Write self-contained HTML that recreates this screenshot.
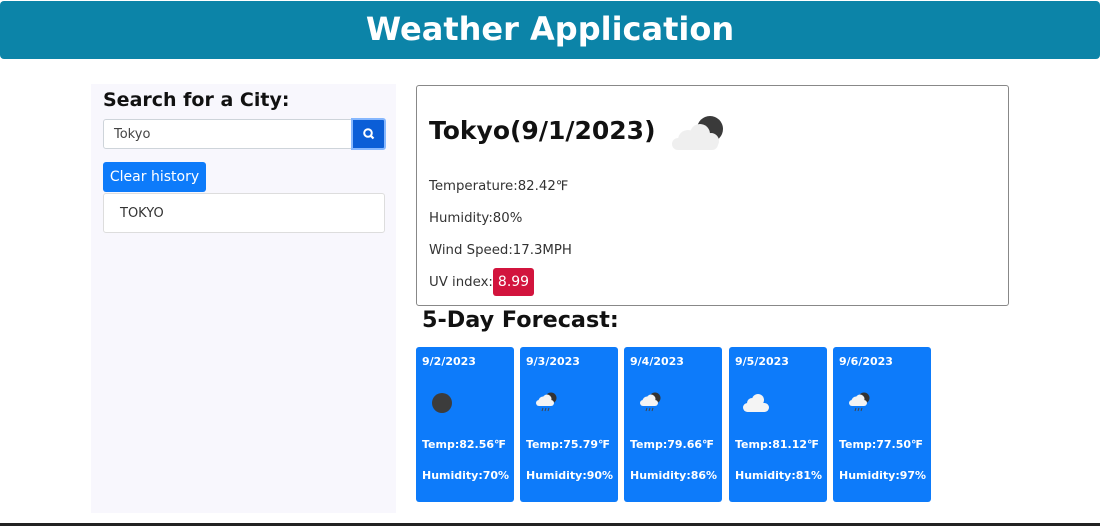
<!DOCTYPE html>
<html><head><meta charset="utf-8"><style>
*{box-sizing:border-box;margin:0;padding:0}
body{width:1100px;height:526px;background:#fff;position:relative;overflow:hidden;font-family:"DejaVu Sans","Liberation Sans",sans-serif;color:#333}
.a{position:absolute}
.hdr{left:0;top:1px;width:1100px;height:58px;background:#0c84a8;border-radius:4px;color:#fff;font-weight:bold;font-size:32px;text-align:center;line-height:56px}
.side{left:91px;top:84px;width:305px;height:429px;background:#f8f7fd}
.card{background:#0d7bfa;border-radius:3px;width:98px;height:155px;top:347px;color:#fff;font-size:11px;font-weight:bold}
.card div{position:absolute;left:6px}
.main{left:416px;top:85px;width:593px;height:221px;border:1px solid #888;border-radius:3px}
.t{font-size:13.3px;color:#333;left:429px}
</style></head><body>
<div class="a hdr">Weather Application</div>
<div class="a side"></div>
<div class="a" style="left:103px;top:89px;font-size:19px;font-weight:bold;color:#111">Search for a City:</div>
<div class="a" style="left:103px;top:119px;width:249px;height:30px;background:#fff;border:1px solid #ced4da;border-radius:3px 0 0 3px;font-size:13px;color:#444;padding:7px 10px">Tokyo</div>
<div class="a" style="left:351px;top:118px;width:35px;height:32px;background:#0b5ed7;border:2px solid #86b7fe;border-radius:0 3px 3px 0">
<svg width="31" height="28" viewBox="0 0 31 28"><circle cx="15" cy="13" r="3.8" stroke="#fff" stroke-width="2" fill="none"/><line x1="17.8" y1="15.8" x2="20.5" y2="18.5" stroke="#fff" stroke-width="2.2"/></svg></div>
<div class="a" style="left:103px;top:162px;width:103px;height:30px;background:#0d7bfa;border-radius:3px;color:#fff;font-size:14px;line-height:31px;text-align:center">Clear history</div>
<div class="a" style="left:103px;top:193px;width:282px;height:40px;background:#fff;border:1px solid #ddd;border-radius:3px;font-size:13px;color:#333;padding:12px 16px">TOKYO</div>
<div class="a main"></div>
<div class="a" style="left:429px;top:116px;font-size:25px;font-weight:bold;color:#111">Tokyo(9/1/2023)</div>
<svg class="a" style="left:668px;top:112px" width="60" height="42" viewBox="0 0 60 42"><circle cx="42" cy="17" r="13" fill="#3a3a3a"/><g fill="#efefef"><circle cx="20" cy="28" r="10"/><circle cx="32" cy="22" r="10"/><rect x="4" y="26" width="46" height="12" rx="6"/><circle cx="43" cy="29" r="8"/></g></svg>
<div class="a t" style="top:179px">Temperature:82.42℉</div>
<div class="a t" style="top:211px">Humidity:80%</div>
<div class="a t" style="top:243px">Wind Speed:17.3MPH</div>
<div class="a t" style="top:275px">UV index:</div>
<div class="a" style="left:493px;top:268px;width:41px;height:28px;background:#d2143d;border-radius:3px;color:#fff;font-size:14px;line-height:28px;text-align:center">8.99</div>
<div class="a" style="left:422px;top:307px;font-size:22.3px;font-weight:bold;color:#111">5-Day Forecast:</div>

<div class="a card" style="left:416px"><div style="top:8px">9/2/2023</div><svg class="a" style="left:14px;top:44px" width="24" height="24"><circle cx="12" cy="12" r="10" fill="#3c3c3c"/></svg><div style="top:91px">Temp:82.56℉</div><div style="top:122px">Humidity:70%</div></div>
<div class="a card" style="left:520px"><div style="top:8px">9/3/2023</div><svg class="a" style="left:14px;top:42px" width="26" height="26"><circle cx="17" cy="9" r="5.5" fill="#333"/><g fill="#f4f4f4"><circle cx="9" cy="12" r="4.5"/><circle cx="13" cy="10" r="4.5"/><rect x="2" y="11" width="18" height="6" rx="3"/></g><g stroke="#444" stroke-width="1"><line x1="9" y1="19" x2="8" y2="22"/><line x1="12" y1="19" x2="11" y2="22"/><line x1="15" y1="19" x2="14" y2="22"/></g></svg><div style="top:91px">Temp:75.79℉</div><div style="top:122px">Humidity:90%</div></div>
<div class="a card" style="left:624px"><div style="top:8px">9/4/2023</div><svg class="a" style="left:14px;top:42px" width="26" height="26"><circle cx="17" cy="9" r="5.5" fill="#333"/><g fill="#f4f4f4"><circle cx="9" cy="12" r="4.5"/><circle cx="13" cy="10" r="4.5"/><rect x="2" y="11" width="18" height="6" rx="3"/></g><g stroke="#444" stroke-width="1"><line x1="9" y1="19" x2="8" y2="22"/><line x1="12" y1="19" x2="11" y2="22"/><line x1="15" y1="19" x2="14" y2="22"/></g></svg><div style="top:91px">Temp:79.66℉</div><div style="top:122px">Humidity:86%</div></div>
<div class="a card" style="left:729px"><div style="top:8px">9/5/2023</div><svg class="a" style="left:12px;top:44px" width="30" height="24"><g fill="#f4f4f4"><circle cx="11" cy="12" r="5"/><circle cx="17" cy="9" r="6"/><rect x="2" y="12" width="26" height="9" rx="4.5"/></g></svg><div style="top:91px">Temp:81.12℉</div><div style="top:122px">Humidity:81%</div></div>
<div class="a card" style="left:833px"><div style="top:8px">9/6/2023</div><svg class="a" style="left:14px;top:42px" width="26" height="26"><circle cx="17" cy="9" r="5.5" fill="#333"/><g fill="#f4f4f4"><circle cx="9" cy="12" r="4.5"/><circle cx="13" cy="10" r="4.5"/><rect x="2" y="11" width="18" height="6" rx="3"/></g><g stroke="#444" stroke-width="1"><line x1="9" y1="19" x2="8" y2="22"/><line x1="12" y1="19" x2="11" y2="22"/><line x1="15" y1="19" x2="14" y2="22"/></g></svg><div style="top:91px">Temp:77.50℉</div><div style="top:122px">Humidity:97%</div></div>
<div class="a" style="left:0;top:523px;width:1100px;height:3px;background:#222"></div>
</body></html>
